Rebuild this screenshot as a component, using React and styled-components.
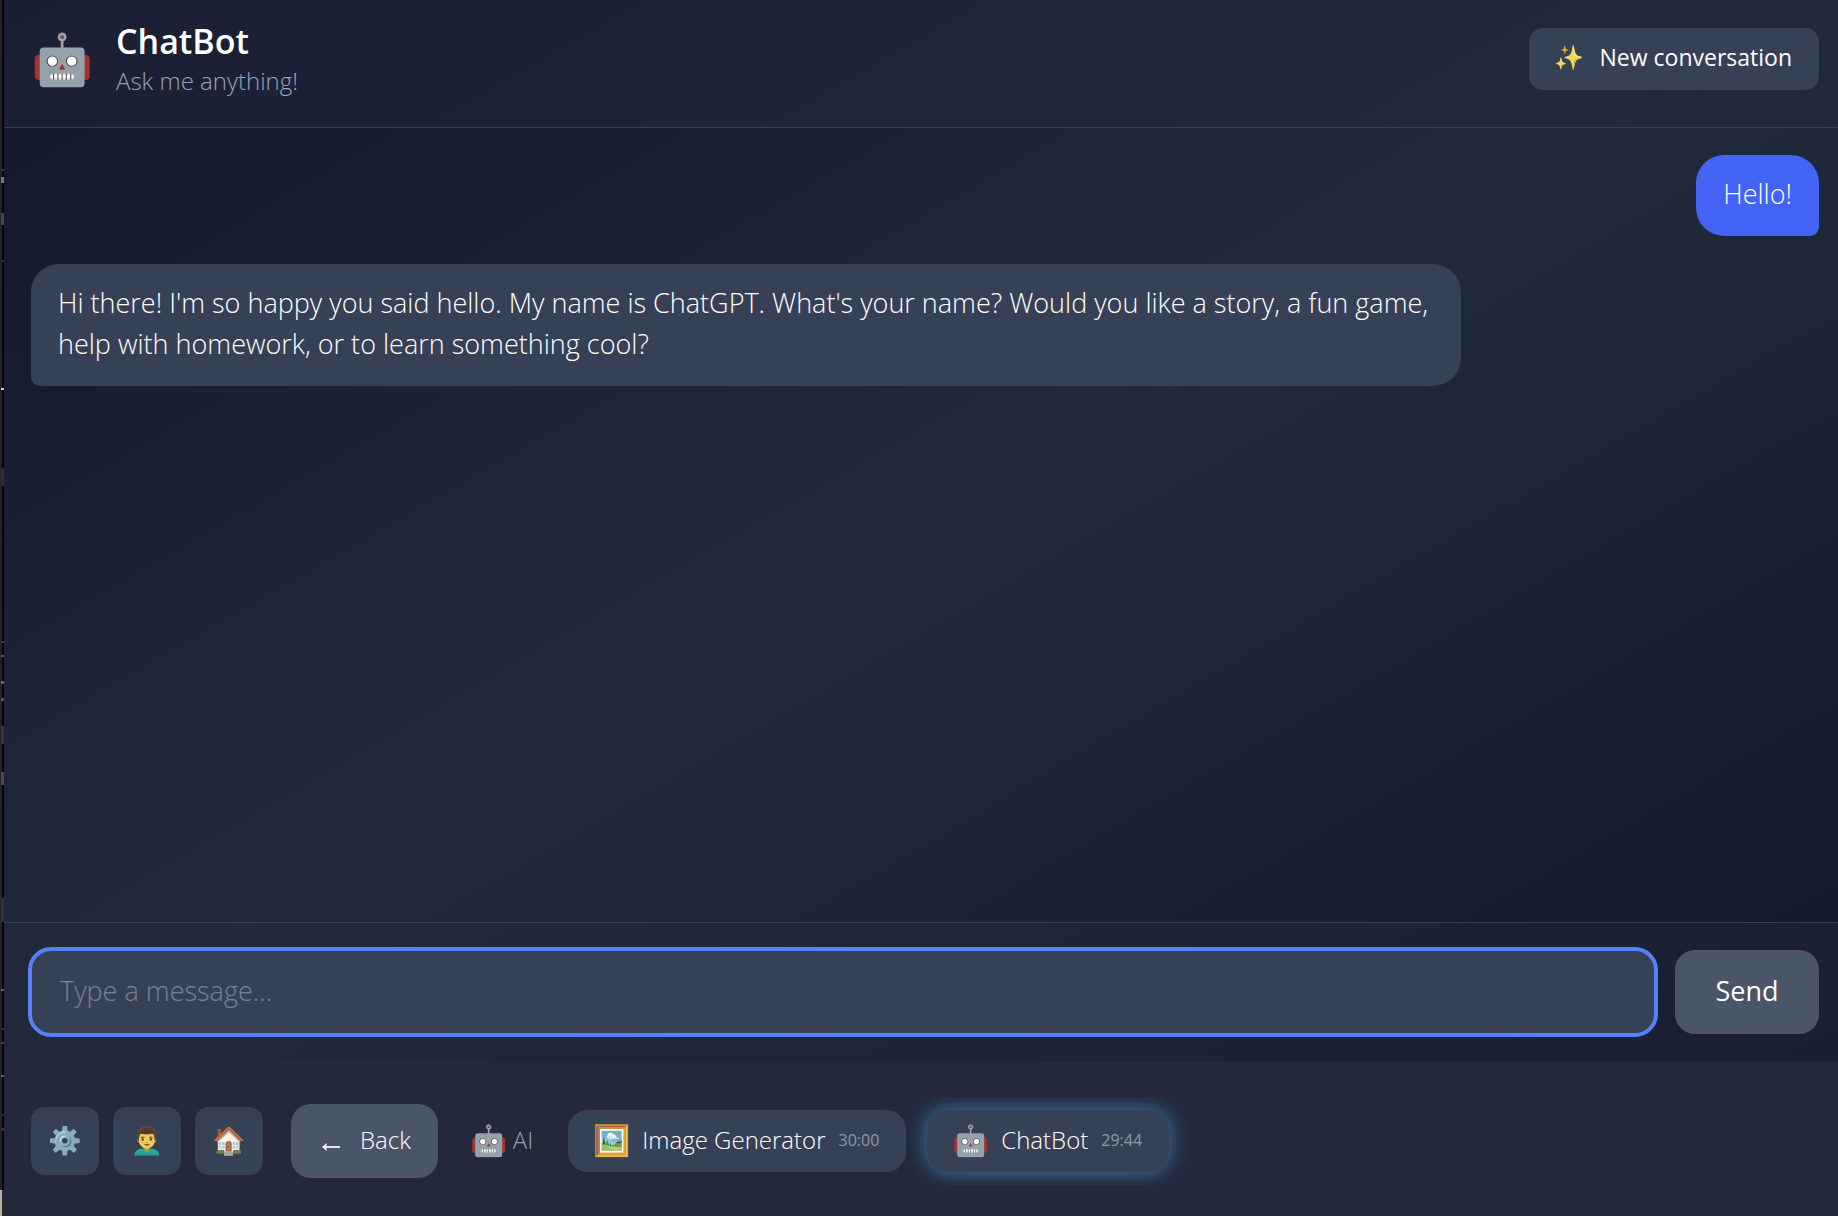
import React, { useState } from 'react';
import styled, { createGlobalStyle } from 'styled-components';

const GlobalStyle = createGlobalStyle`
  * {
    box-sizing: border-box;
  }

  body {
    margin: 0;
    background: #14182a;
    color: #fff;
    font-family: "Open Sans", "Noto Sans", sans-serif;
    font-size: 27px;
    font-weight: 300;
  }

  button, input {
    font: inherit;
    color: inherit;
    border: 0;
  }

  button {
    cursor: pointer;
  }
`;

const Screen = styled.div`
  display: flex;
  min-height: 100vh;
`;

// sliver of the window that sits behind the chat
const Edge = styled.svg`
  flex: none;
  width: 4px;
  height: 100vh;
`;

const Shell = styled.div`
  flex: 1;
  min-width: 0;
  display: flex;
  flex-direction: column;
`;

const Chat = styled.div`
  flex: 1;
  display: flex;
  flex-direction: column;
  background: linear-gradient(to bottom right, #13172a, #202a3a 50%, #13172a);
`;

const Header = styled.header`
  display: flex;
  align-items: center;
  gap: 22px;
  padding: 20px 19px 27px 27px;
  background: rgba(33, 40, 59, 0.5);
  border-bottom: 1px solid #363f54;
`;

const Titles = styled.div`
  flex: 1;
`;

const Title = styled.h1`
  margin: 0;
  font-size: 34px;
  font-weight: 600;
  line-height: 42px;
`;

const Subtitle = styled.p`
  margin: 0;
  color: #95a2bd;
  font-size: 24px;
  line-height: 38px;
`;

const Emoji = styled.span`
  flex: none;
  display: flex;
  align-items: center;
  justify-content: center;
  width: ${(props) => props.$box}px;
  height: ${(props) => props.$box}px;
  font-family: "Noto Color Emoji", sans-serif;
  font-size: ${(props) => props.$size}px;
  line-height: 1;
  filter: saturate(0.75);
`;

// lifts the text so that its capitals sit on the middle of the button
const Label = styled.span`
  padding-bottom: 3px;
`;

const NewButton = styled.button`
  display: flex;
  align-items: center;
  gap: 16px;
  height: 62px;
  margin-bottom: 2px;
  padding: 0 27px 2px;
  border-radius: 14px;
  background: #374155;
  font-size: 23px;
  font-weight: 400;
`;

const Messages = styled.main`
  flex: 1;
  display: flex;
  flex-direction: column;
  gap: 28px;
  padding: 27px 19px 27px 27px;
`;

const Bubble = styled.div`
  max-width: 80%;
  padding: 18px 27px 22px;
  line-height: 41px;
  align-self: ${(props) => (props.$mine ? 'flex-end' : 'flex-start')};
  background: ${(props) => (props.$mine ? '#4263f3' : '#374155')};
  border-radius: ${(props) => (props.$mine ? '28px 28px 9px 28px' : '28px 28px 28px 9px')};
`;

const Composer = styled.form`
  display: flex;
  gap: 20px;
  padding: 27px 19px 27px 27px;
  background: rgba(33, 40, 59, 0.5);
  border-top: 1px solid #363f54;
`;

const MessageInput = styled.input`
  flex: 1;
  min-width: 0;
  height: 84px;
  padding: 0 29px 3px;
  border-radius: 20px;
  background: #374155;
  outline: 4px solid #5681fb;
  outline-offset: -1px;

  &::placeholder {
    color: #74819d;
    opacity: 1;
  }
`;

const SendButton = styled.button`
  width: 144px;
  height: 84px;
  padding: 0 0 3px;
  border-radius: 20px;
  background: #4a5568;
  font-weight: 400;
`;

const Dock = styled.footer`
  display: flex;
  align-items: center;
  gap: 14px;
  padding: 36px 19px 31px 27px;
  background: #23283b;
`;

const IconButton = styled.button`
  display: flex;
  align-items: center;
  justify-content: center;
  width: 68px;
  height: 68px;
  padding: 0;
  border-radius: 14px;
  background: #374155;
`;

const BackButton = styled.button`
  display: flex;
  align-items: center;
  gap: 18px;
  height: 74px;
  margin-left: 14px;
  padding: 0 27px;
  border-radius: 20px;
  background: #4a5568;
  font-size: 24px;
`;

const Tabs = styled.nav`
  flex: 1;
  min-width: 0;
  display: flex;
  align-items: center;
  gap: 21px;
  padding: 13px 20px;
  overflow: hidden;
`;

const Group = styled.span`
  display: flex;
  align-items: center;
  gap: 7px;
  margin-right: 14px;
  color: #95a2bd;
  font-size: 24px;
`;

const Tab = styled.button`
  display: flex;
  align-items: center;
  gap: 13px;
  height: 62px;
  padding: 0 27px;
  border-radius: 20px;
  background: #374155;
  font-size: 24px;
  white-space: nowrap;
  box-shadow: ${(props) => (props.$active
    ? '0 0 14px rgba(86, 150, 210, 0.4), 0 0 28px rgba(70, 150, 200, 0.5)'
    : 'none')};
`;

const Time = styled.span`
  padding-bottom: 2px;
  color: #8a97b1;
  font-size: 16px;
  font-weight: 400;
`;

const ROUTES = [
  { icon: '⚙️', label: 'Settings' },
  { icon: '👨‍🦱', label: 'Profile' },
  { icon: '🏠', label: 'Home' },
];

const TABS = [
  { icon: '🖼️', name: 'Image Generator', time: '30:00' },
  { icon: '🤖', name: 'ChatBot', time: '29:44' },
];

const MESSAGES = [
  { mine: true, text: 'Hello!' },
  {
    mine: false,
    text: "Hi there! I'm so happy you said hello. My name is ChatGPT. What's your name? Would you like a story, a fun game, help with homework, or to learn something cool?",
  },
];

// y, height, colour of what shows through at the edge
const MARKS = [
  [169, 2, '#3a3a3c'],
  [177, 6, '#777779'],
  [213, 12, '#444446'],
  [260, 2, '#2c2c2e'],
  [388, 2, '#c8c8c8'],
  [468, 18, '#2e2e30'],
  [641, 2, '#3c3c3e'],
  [655, 2, '#5a5a5c'],
  [681, 3, '#6a6a6c'],
  [698, 3, '#5a5a5c'],
  [726, 18, '#38383a'],
  [772, 13, '#4a4a4c'],
  [898, 24, '#333335'],
  [989, 2, '#66686c'],
  [1028, 2, '#2c2c2e'],
  [1042, 2, '#4a4a4c'],
  [1075, 2, '#66686c'],
  [1114, 2, '#3c1a1e'],
  [1128, 3, '#5c2228'],
];

function WindowEdge() {
  return (
    <Edge viewBox="0 0 4 1216" preserveAspectRatio="none" aria-hidden="true">
      <rect width="2" height="1216" fill="#222427" />
      <rect x="2" width="2" height="1216" fill="#050506" />
      {MARKS.map(([y, height, fill]) => (
        <rect key={y} x="1" y={y} width="3" height={height} fill={fill} />
      ))}
      <rect y="1190" width="2" height="26" fill="#b5b2a8" />
      <rect x="2" y="1190" width="2" height="26" fill="#2c2a28" />
    </Edge>
  );
}

function BackArrow() {
  return (
    <svg width="24" height="24" viewBox="0 0 24 24" aria-hidden="true">
      <path d="M5 18H22" stroke="#e4e7ec" strokeWidth="2" fill="none" />
      <path d="M4 18L9 14L8 18L9 22Z" fill="#fff" />
    </svg>
  );
}

function App() {
  const [draft, setDraft] = useState('');
  const [messages, setMessages] = useState(MESSAGES);
  const [active, setActive] = useState('ChatBot');

  const send = (e) => {
    e.preventDefault();
    if (!draft.trim()) return;
    setMessages([...messages, { mine: true, text: draft }]);
    setDraft('');
  };

  return (
    <Screen>
      <GlobalStyle />
      <WindowEdge />
      <Shell>
        <Chat>
          <Header>
            <Emoji $box={63} $size={50}>🤖</Emoji>
            <Titles>
              <Title>ChatBot</Title>
              <Subtitle>Ask me anything!</Subtitle>
            </Titles>
            <NewButton type="button" onClick={() => setMessages([])}>
              <Emoji $box={28} $size={24}>✨</Emoji>
              <Label>New conversation</Label>
            </NewButton>
          </Header>

          <Messages>
            {messages.map((message, index) => (
              <Bubble key={index} $mine={message.mine}>{message.text}</Bubble>
            ))}
          </Messages>

          <Composer onSubmit={send}>
            <MessageInput
              aria-label="Message"
              placeholder="Type a message..."
              value={draft}
              onChange={(e) => setDraft(e.target.value)}
            />
            <SendButton type="submit">Send</SendButton>
          </Composer>
        </Chat>

        <Dock>
          {ROUTES.map((route) => (
            <IconButton key={route.label} type="button" aria-label={route.label}>
              <Emoji $box={34} $size={27}>{route.icon}</Emoji>
            </IconButton>
          ))}
          <BackButton type="button">
            <BackArrow />
            <Label>Back</Label>
          </BackButton>
          <Tabs>
            <Group>
              <Emoji $box={34} $size={30}>🤖</Emoji>
              <Label>AI</Label>
            </Group>
            {TABS.map((tab) => (
              <Tab
                key={tab.name}
                type="button"
                $active={tab.name === active}
                onClick={() => setActive(tab.name)}
              >
                <Emoji $box={34} $size={30}>{tab.icon}</Emoji>
                <Label>{tab.name}</Label>
                <Time>{tab.time}</Time>
              </Tab>
            ))}
          </Tabs>
        </Dock>
      </Shell>
    </Screen>
  );
}

export default App;
